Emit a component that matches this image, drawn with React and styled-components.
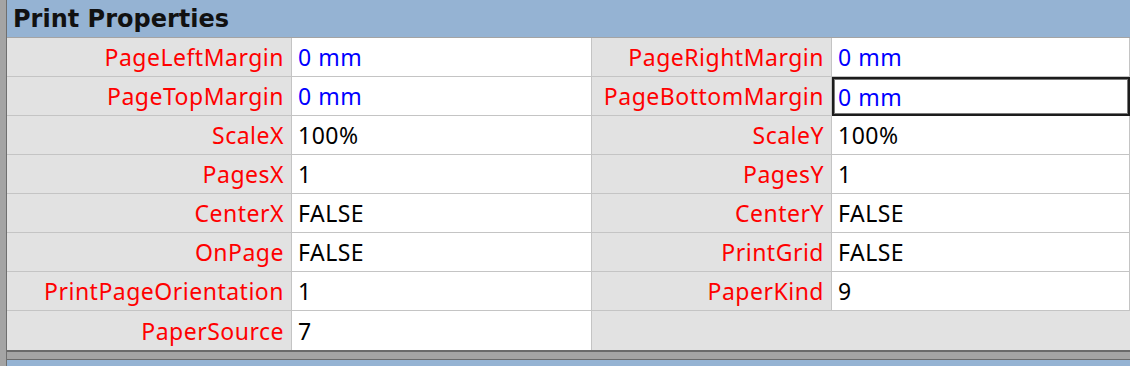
import React from "react";
import styled, { createGlobalStyle } from "styled-components";

const Global = createGlobalStyle`
  html, body { margin: 0; padding: 0; background: #a4a4a4; }
  body { font-family: "Noto Sans", "Open Sans", sans-serif; }
`;

const Frame = styled.div`
  display: flex;
  width: 1130px;
  height: 366px;
  overflow: hidden;
  background: #a4a4a4;
`;

const Strip = styled.div`
  width: 6px;
  flex: none;
  background: #a4a4a4;
  border-right: 1px solid #6f6f6f;
`;

const Main = styled.div`
  flex: 1;
  display: flex;
  flex-direction: column;
  min-width: 0;
`;

const Header = styled.div`
  height: 38px;
  box-sizing: border-box;
  background: #95b3d3;
  border-bottom: 1px solid #a4a4a4;
  display: flex;
  align-items: center;
  padding-left: 6px;
  font-family: "DejaVu Sans", "Noto Sans", sans-serif;
  font-size: 24px;
  font-weight: 700;
  color: #111;
`;

const Grid = styled.div`
  display: grid;
  grid-template-columns: 285px 300px 240px 1fr;
  grid-auto-rows: 39px;
  background: #ffffff;
`;

const Cell = styled.div`
  box-sizing: border-box;
  border-right: 1px solid #c4c4c4;
  border-bottom: ${(p) => (p.$last ? "none" : "1px solid #c4c4c4")};
  display: flex;
  align-items: center;
  font-size: 23px;
  letter-spacing: 0.5px;
  white-space: nowrap;
  overflow: hidden;
`;

const Label = styled(Cell)`
  background: #e2e2e2;
  color: #ff0000;
  justify-content: flex-end;
  padding-right: 7px;
`;

const Value = styled(Cell)`
  background: #ffffff;
  color: ${(p) => (p.$blue ? "#0000ff" : "#000000")};
  padding-left: 6px;
  ${(p) =>
    p.$selected &&
    `
    border: 2px solid #1c1c1c;
    box-shadow: inset 0 0 0 1px #7a7a7a;
    padding-left: 4px;
  `}
`;

const Filler = styled(Cell)`
  background: #e2e2e2;
  grid-column: span 2;
  border-right: none;
`;

const Bottom = styled.div`
  height: 7px;
  flex: none;
  background: #a4a4a4;
  border-top: 2px solid #6a6a6a;
  border-bottom: 1px solid #6a6a6a;
`;

const NextPanel = styled.div`
  flex: 1;
  background: #95b3d3;
`;

const rows = [
  ["PageLeftMargin", "0 mm", true, "PageRightMargin", "0 mm", true],
  ["PageTopMargin", "0 mm", true, "PageBottomMargin", "0 mm", true, true],
  ["ScaleX", "100%", false, "ScaleY", "100%", false],
  ["PagesX", "1", false, "PagesY", "1", false],
  ["CenterX", "FALSE", false, "CenterY", "FALSE", false],
  ["OnPage", "FALSE", false, "PrintGrid", "FALSE", false],
  ["PrintPageOrientation", "1", false, "PaperKind", "9", false],
];

export default function App() {
  return (
    <>
      <Global />
      <Frame>
        <Strip />
        <Main>
          <Header>Print Properties</Header>
          <Grid>
            {rows.map(([l1, v1, b1, l2, v2, b2, sel]) => (
              <React.Fragment key={l1}>
                <Label>{l1}</Label>
                <Value $blue={b1}>{v1}</Value>
                <Label>{l2}</Label>
                <Value $blue={b2} $selected={sel}>
                  {v2}
                </Value>
              </React.Fragment>
            ))}
            <Label $last>PaperSource</Label>
            <Value $last>7</Value>
            <Filler $last />
          </Grid>
          <Bottom />
          <NextPanel />
        </Main>
      </Frame>
    </>
  );
}
